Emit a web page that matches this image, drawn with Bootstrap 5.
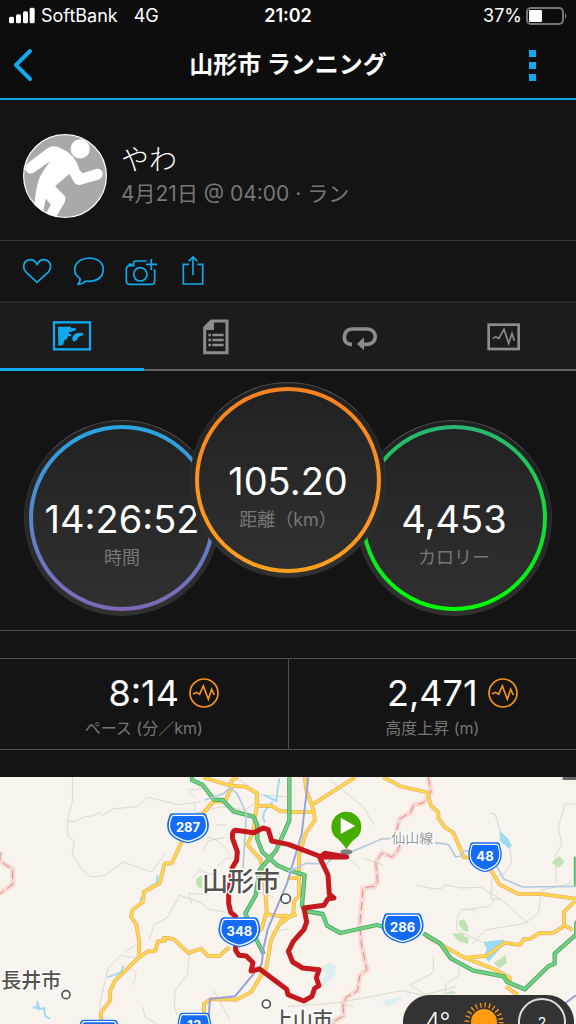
<!DOCTYPE html>
<html lang="ja">
<head>
<meta charset="utf-8">
<meta name="viewport" content="width=device-width, initial-scale=1">
<title>山形市 ランニング</title>
<link href="https://cdn.jsdelivr.net/npm/bootstrap@5.3.0/dist/css/bootstrap.min.css" rel="stylesheet">
<script src="https://cdn.jsdelivr.net/npm/bootstrap@5.3.0/dist/js/bootstrap.bundle.min.js" defer></script>
<style>
:root { --accent: #11a9ed; --muted: #777; --rule: #505050; }
body { background: #141414; color: #fff; font-family: Inter, "Noto Sans CJK JP", sans-serif; }
svg { display: block; }
button, .tab-link { background: none; border: 0; padding: 0; color: var(--accent); }
.status-bar { height: 32px; background: #0d0d0d; font-size: 18px; line-height: 32px; padding: 0 8px; }
.status-bar > div { flex: 1 1 0; }
.title-bar { height: 68px; background: #0d0d0d; border-bottom: 2px solid var(--accent); padding: 0 12px; }
.title-bar h1 { font-size: 24px; line-height: 32px; font-weight: 700; }
.title-bar button { width: 40px; }
.profile { height: 141px; padding: 12px 23px 0; gap: 14px; border-bottom: 1px solid #383838; }
.profile h2 { font-size: 28px; line-height: 36px; font-weight: 300; }
.profile p { font-size: 21px; line-height: 32px; color: var(--muted); }
.avatar { width: 84px; height: 84px; flex: none; }
.actions { height: 62px; padding: 0 11px; border-bottom: 2px solid #2b2b2b; }
.actions button { width: 52px; height: 58px; }
.tab-row { background: #1c1c1c; height: 68px; border-bottom: 2px solid #626262; }
.tab-link { height: 68px; color: #8c8c8c; }
.tab-link.on { color: var(--accent); border-bottom: 3px solid var(--accent); }
.dials { height: 260px; padding-top: 11px; border-bottom: 1px solid var(--rule); }
.dial { width: 196px; height: 196px; border-radius: 50%; padding: 4px; border: 1px solid #303030; border-top-color: #505050; background: linear-gradient(#202020, #303030); flex: none; }
.dial-side { margin-top: 38px; }
.dial-main { margin: 0 -30px; position: relative; }
.ring { height: 100%; border-radius: 50%; border: 4px solid transparent; padding-top: 68px; text-align: center; background: linear-gradient(#222, #303030) padding-box, linear-gradient(var(--from), var(--to)) border-box; }
.ring-time { --from: #2aa5e0; --to: #8068b8; }
.ring-dist { --from: #f58220; --to: #ffa01e; }
.ring-cal { --from: #2ab573; --to: #00ff00; }
.figure-num { font-size: 38px; line-height: 44px; white-space: nowrap; }
.ring .figure-num { display: flex; justify-content: center; }
.dial-label { font-size: 18px; line-height: 34px; color: var(--muted); white-space: nowrap; }
.stats { margin: 27px 0; border-top: 1px solid var(--rule); border-bottom: 1px solid var(--rule); }
.stat { height: 90px; padding-top: 12px; text-align: center; }
.stat + .stat { border-left: 1px solid var(--rule); }
.stat-line { display: grid; grid-template-columns: 1fr auto 1fr; align-items: center; }
.stat-line .figure-num { grid-column: 2; font-size: 36px; }
.stat-line button { margin-left: 10px; justify-self: start; }
.stat-label { font-size: 16px; line-height: 26px; color: var(--muted); }
.map-area { flex: 1 1 0; min-height: 246px; background: #f8f4ed; }
.map-area > svg { position: absolute; width: 100%; height: 100%; }
.weather { position: absolute; right: 2px; bottom: -25px; width: 171px; height: 54px; border-radius: 27px; background: #333; padding: 0 8px 0 22px; }
.weather .temp { font-size: 24px; line-height: 32px; font-weight: 300; }
.wind { width: 48px; height: 48px; border: 2px solid #ddd; border-radius: 50%; font-size: 14px; }
</style>
</head>
<body>
<div class="d-flex flex-column min-vh-100">
  <div class="status-bar d-flex align-items-center">
    <div class="d-flex align-items-center">
      <svg width="33" height="18" viewBox="24 20 99 54" fill="#fff" aria-hidden="true"><rect x="27" y="49" width="15" height="20" rx="5"/><rect x="48" y="42" width="15" height="27" rx="5"/><rect x="69" y="33" width="15" height="36" rx="5"/><rect x="89" y="22" width="15" height="47" rx="5"/></svg>
      <span>SoftBank</span><span class="ms-3">4G</span>
    </div>
    <span class="fw-semibold">21:02</span>
    <div class="d-flex align-items-center justify-content-end gap-1">
      <span>37%</span>
      <svg width="42" height="20" viewBox="0 0 42 20" aria-hidden="true"><rect x="1" y="2" width="36" height="16" rx="4" fill="none" stroke="#777" stroke-width="2"/><rect x="3" y="4" width="13" height="12" rx="1" fill="#fff"/><path d="M39 7q3 3 0 6z" fill="#777"/></svg>
    </div>
  </div>
  <header class="title-bar d-flex align-items-center justify-content-between">
    <button type="button" aria-label="戻る"><svg width="24" height="36" viewBox="0 0 24 36" fill="none" stroke="currentColor" stroke-width="4" stroke-linecap="round" stroke-linejoin="round"><path d="M18 4 4 18l14 14"/></svg></button>
    <h1 class="m-0">山形市 ランニング</h1>
    <button type="button" aria-label="メニュー"><svg width="24" height="32" viewBox="0 0 24 32" fill="currentColor"><path d="M5 1h7v7H5zM5 13h7v7H5zM5 25h7v7H5z"/></svg></button>
  </header>

  <section class="profile d-flex align-items-center">
    <svg class="avatar" viewBox="69 69 254 254" role="img" aria-label="ランナー">
      <defs><clipPath id="face"><circle cx="196" cy="196" r="125"/></clipPath></defs>
      <circle cx="196" cy="196" r="124" fill="#a9a9a9"/>
      <g clip-path="url(#face)" fill="#fff">
        <circle cx="242" cy="114" r="29"/>
        <path d="M143 112q19-12 40 0 44 17 57 66l9 10 42-14q17 0 19 15-1 14-14 18l-55 16q-10 1-16-6l-16-27-43 37 28 28q7 10-1 24l-28 47h-35l23-43-14-18q-8 20-10 62h-28q3-79 15-119 8-21 36-57l-52 36q-16 5-23-8-4-12 7-22z"/>
      </g>
      <circle cx="196" cy="196" r="125" fill="none" stroke="#fff" stroke-width="4"/>
    </svg>
    <div><h2 class="m-0">やわ</h2><p class="m-0">4月21日 @ 04:00 · ラン</p></div>
  </section>

  <div class="actions d-flex align-items-center">
    <button type="button" aria-label="いいね"><svg class="mx-auto" width="32" height="32" viewBox="62 434 96 96" fill="none" stroke="currentColor" stroke-width="5" stroke-linejoin="round"><path d="M110 516 78 486q-10-10-7-24 4-13 19-14 13 0 20 15 7-15 21-15 14 1 19 14 3 14-7 24z"/></svg></button>
    <button type="button" aria-label="コメント"><svg class="mx-auto" width="32" height="32" viewBox="219 434 96 96" fill="none" stroke="currentColor" stroke-width="5" stroke-linejoin="round"><path d="M240 504q-16-10-16-26 2-32 43-35 41 2 43 34-2 34-43 36l-10-1q-8 9-23 10 8-8 6-18z"/></svg></button>
    <button type="button" aria-label="写真を追加"><svg class="mx-auto" width="32" height="32" viewBox="375 434 96 96" fill="none" stroke="currentColor" stroke-width="5"><path d="M440 452h-34q-5 0-5 6v8h-11q-11 1-11 11v34q0 11 11 11h63q11 0 11-11v-34M388 466v-4h9"/><circle cx="421" cy="492" r="20"/><path d="M454 446v33M438 462h33"/></svg></button>
    <button type="button" aria-label="共有"><svg class="mx-auto" width="32" height="32" viewBox="527 434 96 96" fill="none" stroke="currentColor" stroke-width="5"><path d="M563 462h-17v59h58v-59h-16M575 495v-54M562 453l13-13 13 13"/></svg></button>
  </div>

  <nav class="tab-row row g-0">
    <a href="#map" class="tab-link on col d-flex align-items-center justify-content-center" aria-label="地図"><svg width="40" height="40" viewBox="156 62 120 120"><rect x="162" y="81" width="108" height="81" fill="none" stroke="currentColor" stroke-width="7"/><path d="M174 94h38l2 5 13-1v7l-13 4-8 2 1 5h6v7h-10v7l-9 4-5 15-14 2zM218 124q4-9 13-11l17-1 3 6-16 7q-4 12-13 14-8-5-4-15z" fill="currentColor"/></svg></a>
    <a href="#detail" class="tab-link col d-flex align-items-center justify-content-center" aria-label="詳細"><svg width="40" height="40" viewBox="588 62 120 120"><path d="M634 74h47v95h-67V94z" fill="none" stroke="currentColor" stroke-width="9"/><path d="M632 72h10v29h-30v-9zM637 112h34v8h-34zM637 127h34v8h-34zM637 142h34v8h-34zM625 112h8v8h-8zM625 127h8v8h-8zM625 142h8v8h-8z" fill="currentColor"/></svg></a>
    <a href="#laps" class="tab-link col d-flex align-items-center justify-content-center" aria-label="ラップ"><svg width="40" height="40" viewBox="156 62 120 120"><path d="M192 144h-4q-19-2-19-22 2-23 23-24h47q21 2 23 23-2 21-23 23h-16" fill="none" stroke="currentColor" stroke-width="11"/><path d="m207 143 21-20v39z" fill="currentColor"/></svg></a>
    <a href="#graph" class="tab-link col d-flex align-items-center justify-content-center" aria-label="グラフ"><svg width="40" height="40" viewBox="588 62 120 120" fill="none" stroke="currentColor"><rect x="602" y="85" width="90" height="73" stroke-width="8"/><path d="m614 127 9-6 9 6 16-28 14 42 10-30 7 22" stroke-width="5"/></svg></a>
  </nav>

  <section class="dials d-flex justify-content-center align-items-start">
    <div class="dial dial-side"><div class="ring ring-time"><div class="figure-num">14:26:52</div><div class="dial-label">時間</div></div></div>
    <div class="dial dial-main"><div class="ring ring-dist"><div class="figure-num">105.20</div><div class="dial-label">距離（km）</div></div></div>
    <div class="dial dial-side"><div class="ring ring-cal"><div class="figure-num">4,453</div><div class="dial-label">カロリー</div></div></div>
  </section>

  <section class="stats row g-0">
    <div class="stat col">
      <div class="stat-line"><span class="figure-num">8:14</span><button type="button" aria-label="ペースのグラフ"><svg width="30" height="30" viewBox="565 112 90 90" fill="none" stroke="#f7941d" stroke-width="5"><circle cx="610" cy="157" r="42"/><path d="m577 160 11-5 9 6 11-25 15 40 10-30 8 17"/></svg></button></div>
      <div class="stat-label">ペース (分／km)</div>
    </div>
    <div class="stat col">
      <div class="stat-line"><span class="figure-num">2,471</span><button type="button" aria-label="高度のグラフ"><svg width="30" height="30" viewBox="565 112 90 90" fill="none" stroke="#f7941d" stroke-width="5"><circle cx="610" cy="157" r="42"/><path d="m577 160 11-5 9 6 11-25 15 40 10-30 8 17"/></svg></button></div>
      <div class="stat-label">高度上昇 (m)</div>
    </div>
  </section>

  <section class="map-area position-relative overflow-hidden" id="map">
    <svg viewBox="0 21 1728 741" preserveAspectRatio="xMidYMin slice" role="img" aria-label="コースの地図">
      <defs>
        <path id="roads" d="M303 750v-22l28-37-1-26 15-33 70-68 28-20h22l9-30 22-2-5-8 14 0 18 5 42 40 38-13 21 22h34l30-27M416 560l2-42-9-55-16-22 4-21 32-24 3-31 47-25 15-59 22-2 40-89M600 140l40-45 36-1 18-42 0-20 20-12M610 22l80 25 48 3 33 20-1 40-10 76-18 38 40 45 13 85 5 70-15 53-25 17M768 108l34-1 14 1 25 16h25M866 126h76M795 432l42 6 27-1M890 432l-46 20-30 55-15 85-46 75-44 22-75-2-22 14v46M914 22l5 39 20 55 6 34-28 40-20 68v120l-15 17-2 36-38 30M866 324h30M940 102 1065 22M1150 22l52 27 80 18 11 40 22 20v17l20 28 25 16 32 74 22 2 30 0 32 42 22 37 55 28 70 1 110 15M1728 390l-36 36v42l-34 22-40-1-26 17-20 1-13 18-45-7-55 40-65 5-115-64M1394 563l90 35 45 25 2 18M1518 650l36 25M1692 466l26 14"/>
        <path id="highways" d="M576 22v8l32 15 34 44 26 1 32 34 60 16 12 25 0 42 15 39 45 40 26 12 56 17-8 90 8 18 54 9 13 35 40 22 110-24 30 8M868 22v130l-40 90-49 58-12 76-31 54 29 70 26 52M1270 490l50 30 32 45 68 37 90 17 12 17 52 22 72-70 18-7v-30l65-58v-32l10-18M1728 260v90"/>
        <path id="border-line" d="M1285 22l8 45-24 32-28 6-10 24-32 17-13 50 20 10-12 35-18 20-30-12-18 25v20l5 40-10 15-34 5-2 30-8 80 6 65 16 70-22 18-6 45-34 20-10 20 2 35-30 18-12 36M0 245v28l38 25 0 45-38 28"/>
      </defs>
      <g fill="none" stroke="#d8d9d1" stroke-width="3" stroke-linejoin="round">
        <path d="M217 22v72l-14 54v50l20 17-7 36 32 48 25 22 42-5 55-40 84 30 43-55M203 150l10 5 20-4 20-10 30-5 14-10 10 10 35-20 70-6 32-28 90 22 66-8M610 240l15-28 50-10M575 325l25-25 45 18M560 55l30 30M570 60l50-6M585 95v35l80-20 70 10 45-30M620 200l30 10 22 20 20 26M650 290l28-24 35-5M447 510l16-48 38-18 38-68 60 20 28 22 46 8M565 370l10 30M376 545l30-20M300 740v-40l24-105 38-38 52 8M399 645l10-35-20-20M428 710l6 30 37 22M531 735l-8-30 2-42 38-52 5-60M812 485l52-8M650 165h30M700 15l80 60 80 5M567 370l60 5M835 190l30 5M840 320l-50 20M820 380l-45-12M640 660l50 90"/>
        <path d="M990 30l100 80 32 55M1040 260l40 35M1250 346l50 10h25l8-12 50 10 60-2 64 40 75 66M1470 130l15 3 16 50 26 35 8 60-20 30-40 20-2 60 30-2M1485 390l-20 20-75 10M1725 102l-30 0-20 70 10 50-20 40 5 80M1715 340l-90 20-10 70-40 30-120 20-38 42M1370 448l15-30 34 0 8 10M1370 448v32l78 38M1336 695v-50l42-30-2-26M1300 560v48l-70 36 46 30 90-24M864 710l150-12 100-18 90-18 70 15 60-2M1020 700l40 10M1090 265l60 20"/>
      </g>
      <g fill="#bfe3b4"><path d="m590 324 17-8v40q-20-4-19-18zM1667 268l10-10 9 8 8 10-10 12-10 6-8-10-12-5zM1377 452l15-4 12 20v18l-15-5-12-15zM1357 490l32 0 5 10 12 2-2 20-30-10zM1487 575l30-20 3 25-22 14-18-16zM1338 668l20-5 12 8h-32z" transform="translate(0 0)"/></g>
      <g fill="none" stroke="#9bdcf2" stroke-width="6"><path d="m838 25-5 30-4 38-38-18M818 95l-25 30-4 18 6 15M472 315l-2 25-20 10M322 622l40-14 8-22M98 712l14 2 0-20 6 24 14-4 4 25 14 8M435 370l-15 22"/></g>
      <path fill="#9bdcf2" d="m1499 183 25 22 12 22-10 8-26-22zM1450 515l60-6 6 10-50 56-14-18 8-20z"/>
      <path fill="#dceff0" d="m965 590 25-10 18 10-5 30-35 30-10-14 20-20zM1145 694l50-12 12 6-20 12-25 10z"/>
      <use href="#border-line" fill="none" stroke="#f4cdc5" stroke-width="16" opacity=".65"/>
      <use href="#border-line" fill="none" stroke="#d88d88" stroke-width="3" stroke-dasharray="26 12"/>
      <g fill="none" stroke-linejoin="round">
        <use href="#roads" stroke="#ecb37a" stroke-width="12"/><use href="#roads" stroke="#ffd847" stroke-width="7"/>
        <use href="#highways" stroke="#4aa762" stroke-width="13"/><use href="#highways" stroke="#70d084" stroke-width="8"/>
        <path d="m925 22-20 170-44 148-58 138-13 60-5 45-80 96-75 8-5 70M1690 704l38-28" stroke="#98a2d8" stroke-width="6"/>
        <path d="m614 90 55-18 22-18 20 16 28 60-10 165M1055 245l90-38 30-2M1305 218l40 5 22 38 16-3 8-15h30M1490 290l22 37 55 24 160-2M864 305l55-25 60 2 25-24" stroke="#b4c9de" stroke-width="5"/>
      </g>
      <path d="M1040 261h-75L865 223l-50-10-10-34-16-5-27 14-55-7q-12 2-9 26l14 38-2 26-14 24-10 75v30l6 27 15 12v102l10 15 22 2 20 20-6 25 26-6 81 61 4 16 47 19 25-14 8-24 13-8-8-24 8-24-49-5-30-18-13-32 15-30 32-36 8-22-8-42 60-8 12-20 18-2-14-11-4-58-25-53 15-12z" fill="none" stroke="#c5191d" stroke-width="15" stroke-linejoin="round" stroke-linecap="round"/>
      <ellipse cx="1039" cy="246" rx="18" ry="8" fill="#444" opacity=".65"/>
      <path d="M1039 237q-16-24-33-36a45 45 0 1 1 66 0q-18 12-33 36z" fill="#45ad00"/><path d="m1022 143 44 25-44 24z" fill="#fff"/>
      <g font-family="'Noto Sans CJK JP', sans-serif" fill="#55514c" stroke="#fff" stroke-width="8" stroke-linejoin="round" paint-order="stroke">
        <text x="606" y="364" font-size="78" font-weight="500">山形市</text>
        <text x="4" y="654" font-size="60" font-weight="500">長井市</text>
        <text x="818" y="772" font-size="60" font-weight="500">上山市</text>
        <text x="1174" y="220" font-size="42" fill="#999">仙山線</text>
      </g>
      <g fill="#fff" stroke="#55514c" stroke-width="5"><circle cx="198" cy="674" r="12"/><circle cx="857" cy="386" r="14"/><circle cx="799" cy="702" r="12"/></g>
      <defs><g id="shield" fill="#146cf6"><path d="M-46-44H46Q54-44 57-34Q82 28 0 46Q-82 28-57-34Q-54-44-46-44z"/><path d="M-43-38H43Q49-38 51-30Q72 24 0 40Q-72 24-51-30Q-49-38-43-38z" stroke="#fff" stroke-width="4"/></g></defs>
      <g font-family="Inter, sans-serif" font-size="39" font-weight="700" text-anchor="middle" fill="#fff">
        <use href="#shield" x="564" y="174"/><text x="564" y="187">287</text>
        <use href="#shield" x="718" y="486"/><text x="718" y="499">348</text>
        <use href="#shield" x="1208" y="474"/><text x="1208" y="487">286</text>
        <use href="#shield" transform="translate(1455 261) scale(.8 1)"/><text x="1455" y="272">48</text>
        <use href="#shield" transform="translate(583 772) scale(.8 1)"/><text x="583" y="780">13</text>
        <use href="#shield" x="297" y="793"/>
      </g>
      <path d="M1688 21h40v9h-40z" fill="#666"/>
    </svg>
    <div class="weather d-flex align-items-center justify-content-between">
      <span class="temp">4°</span>
      <svg width="40" height="40" viewBox="-20 -20 40 40" aria-hidden="true"><circle r="13" fill="#ff9c12"/><circle r="17" fill="none" stroke="#ff9c12" stroke-width="5" stroke-dasharray="1.3 3.15"/></svg>
      <span class="wind d-flex align-items-center justify-content-center">2</span>
    </div>
  </section>
</div>
</body>
</html>
